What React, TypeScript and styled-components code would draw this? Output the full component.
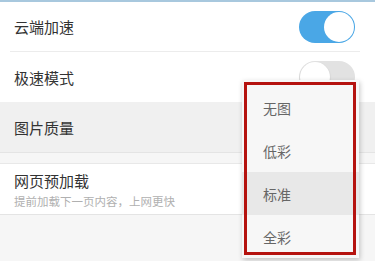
import React from 'react';
import styled, { createGlobalStyle } from 'styled-components';

const GlobalStyle = createGlobalStyle`
  html, body {
    margin: 0;
    padding: 0;
    background: #f6f6f6;
    font-family: 'Noto Sans CJK SC', 'Noto Sans', sans-serif;
  }
`;

const Page = styled.div`
  position: relative;
  width: 375px;
  height: 261px;
  overflow: hidden;
  background: #f6f6f6;
`;

const TopRule = styled.div`
  height: 2px;
  background: #a8c8de;
`;

const Group = styled.div<{ topLine?: boolean }>`
  background: #fff;
  border-top: ${(p) => (p.topLine ? '1px solid #e8e8e8' : 'none')};
  border-bottom: 1px solid #e4e4e4;
`;

const Row = styled.div<{ pressed?: boolean; tall?: boolean }>`
  display: flex;
  align-items: center;
  justify-content: space-between;
  height: ${(p) => (p.tall ? 50 : 49)}px;
  padding: 0 20px 0 14px;
  background: ${(p) => (p.pressed ? '#f0f0f0' : '#fff')};
`;

const Divider = styled.div`
  height: 1px;
  margin: 0 15px 0 10px;
  background: #ececec;
`;

const Label = styled.span`
  font-size: 15px;
  color: #333;
  line-height: 1;
`;

const TextStack = styled.div`
  display: flex;
  flex-direction: column;
  gap: 8px;
  padding-top: 2px;
`;

const Hint = styled.span`
  font-size: 11.5px;
  color: #b0b0b0;
  line-height: 1;
`;

const Gap = styled.div`
  height: 10px;
`;

const Track = styled.div<{ on?: boolean }>`
  position: relative;
  width: 56px;
  height: 32px;
  border-radius: 16px;
  background: ${(p) => (p.on ? '#4aa7e6' : '#e2e2e2')};
`;

const Knob = styled.div<{ on?: boolean }>`
  position: absolute;
  top: 1px;
  left: ${(p) => (p.on ? '25px' : '1px')};
  width: 30px;
  height: 30px;
  border-radius: 50%;
  background: #fff;
  box-shadow: ${(p) => (p.on ? 'none' : '0 1px 2px rgba(0,0,0,0.15)')};
`;

const Menu = styled.div`
  position: absolute;
  left: 242px;
  top: 80px;
  width: 117px;
  background: #f7f7f7;
  box-shadow: 1px 2px 5px rgba(0, 0, 0, 0.22);
`;

const Highlight = styled.div`
  position: absolute;
  left: 2px;
  top: 2px;
  right: 3px;
  bottom: 3px;
  border: 3.5px solid #b5130f;
  pointer-events: none;
`;

const Item = styled.div<{ active?: boolean }>`
  display: flex;
  align-items: center;
  height: 43px;
  padding-left: 21px;
  font-size: 14px;
  color: #666;
  background: ${(p) => (p.active ? '#e8e8e8' : 'transparent')};
  &:first-child {
    margin-top: 6px;
  }
  &:last-child {
    margin-bottom: 5px;
  }
`;

const Toggle: React.FC<{ on?: boolean }> = ({ on }) => (
  <Track on={on}>
    <Knob on={on} />
  </Track>
);

const options = ['无图', '低彩', '标准', '全彩'];

export default function App() {
  return (
    <Page>
      <GlobalStyle />
      <TopRule />
      <Group>
        <Row>
          <Label>云端加速</Label>
          <Toggle on />
        </Row>
        <Divider />
        <Row tall>
          <Label>极速模式</Label>
          <Toggle />
        </Row>
        <Row pressed tall>
          <Label>图片质量</Label>
        </Row>
      </Group>
      <Gap />
      <Group topLine>
        <Row tall>
          <TextStack>
            <Label>网页预加载</Label>
            <Hint>提前加载下一页内容，上网更快</Hint>
          </TextStack>
        </Row>
      </Group>
      <Menu>
        {options.map((o) => (
          <Item key={o} active={o === '标准'}>
            {o}
          </Item>
        ))}
        <Highlight />
      </Menu>
    </Page>
  );
}
